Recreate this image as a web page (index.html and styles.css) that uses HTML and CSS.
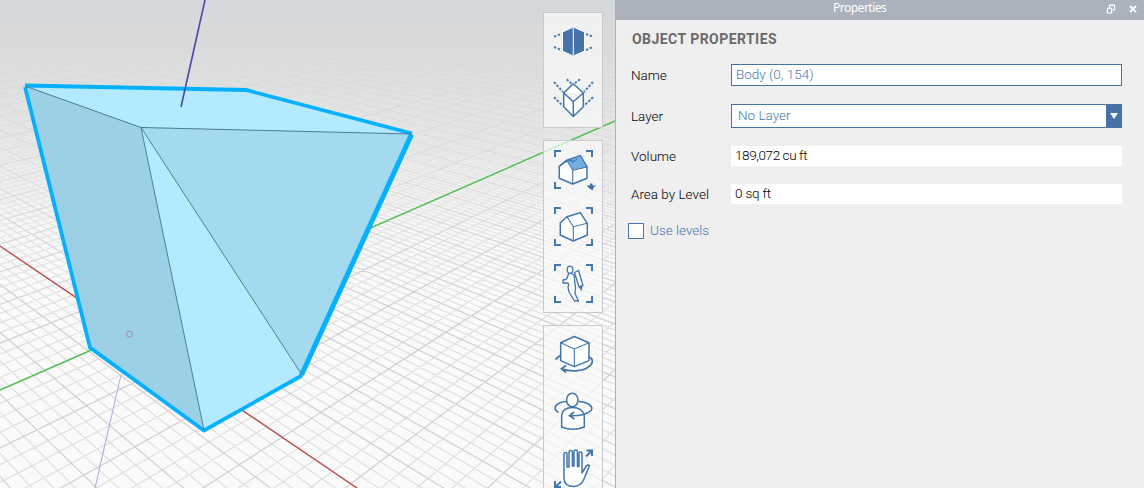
FILE: index.html
```
<!DOCTYPE html>
<html lang="en">
<head>
<meta charset="utf-8">
<title>Properties</title>
<link rel="stylesheet" href="styles.css">
</head>
<body>
<div class="app">
  <main class="viewport">
    <svg class="scene" width="615" height="488" viewBox="0 0 615 488">
      <defs>
        <linearGradient id="sky" x1="0" y1="0" x2="0" y2="1">
          <stop offset="0" stop-color="#d3d8dc"/>
          <stop offset=".07" stop-color="#d9dadb"/>
          <stop offset=".18" stop-color="#dfe0e0"/>
          <stop offset=".3" stop-color="#eaeaea"/>
          <stop offset=".48" stop-color="#f8f8f8"/>
          <stop offset=".6" stop-color="#fafafa"/>
          <stop offset="1" stop-color="#fafafa"/>
        </linearGradient>
        <linearGradient id="fade" x1="0" y1="0" x2="0" y2="488" gradientUnits="userSpaceOnUse">
          <stop offset=".07" stop-color="#000"/>
          <stop offset=".22" stop-color="#666"/>
          <stop offset=".5" stop-color="#ddd"/>
          <stop offset=".7" stop-color="#fff"/>
        </linearGradient>
        <mask id="haze" maskUnits="userSpaceOnUse" x="0" y="0" width="615" height="488"><rect width="615" height="488" fill="url(#fade)"/></mask>
      </defs>
      <rect width="615" height="488" fill="url(#sky)"/>
      <g mask="url(#haze)" fill="none">
        <path id="minor" class="grid-minor"/>
        <path id="major" class="grid-major"/>
      </g>
      <path class="axis red" d="M0 246 357 488"/>
      <path class="axis green" d="M0 390 615 121"/>
      <path class="axis below" d="M121 375 95 488"/>
      <path fill="#9bd0e7" d="M25 86 141 127 204 430 90 347z"/>
      <path fill="#b2eaff" d="M25 86 246 90 412 134 141 127zM141 127 302 375 204 430z"/>
      <path fill="#a3daef" d="M141 127 412 134 302 375z"/>
      <path class="outline" d="M25 85.500 246 90 412 133.500M25 87 90 347.500 204 430.500 302 375.500"/>
      <path class="outline heavy" d="M411.500 134.500 301.500 375"/>
      <path class="edge" d="M25 86 141 127.500 412 134M141 127.500 204 430M141 127.500 302 375"/>
      <path class="axis blue" d="M205 0 181 107"/>
      <circle cx="129.500" cy="334" r="3" fill="none" stroke="#a58b9f"/>
    </svg>
    <nav class="toolbars">
      <div class="toolbar">
        <svg class="tool" viewBox="0 0 58 57"><path fill="#4573a7" stroke="#fff" d="M29.300 14 40.500 19V38.200L29.300 43 18.500 38.200V19z"/><path d="M29.300 15V42" stroke="#fff"/><path class="dots" d="M10 23.700 17 21M42 21 49 23.700M10 34 17 37M42 37 49 34"/></svg>
        <svg class="tool" viewBox="0 0 58 57"><path class="f" d="M29.300 13.700 39.300 23V36.700L29.300 46.500 19.700 36.700V23zM19.700 23 29.300 31.700 39.300 23M29.300 31.700V46"/><path class="dots" d="M10 12 19 22M49 12 40 22M10 27.300 18.700 35.700M49 27.300 40 35.700M22.700 9.300 28 14M36 9.300 31 13"/></svg>
      </div>
      <div class="toolbar">
        <svg class="tool" viewBox="0 0 58 57"><path class="brackets" d="M11 16V10H17M42 10H48V16M11 41V47H17"/><path class="f" d="M15.300 25.300 22.700 19.300 36.300 14.700 43 26V37.300L28.700 43 15.300 37.300z"/><path d="M22.700 19.300 36.300 14.700 43 26 28.700 29.300z" fill="#72aee3" stroke="#4573a7"/><path class="s thin" d="M28.700 29.300V43M19 22 27 19 29 21 33 18M15.300 25.300 22.700 19.300"/><path fill="#3e70aa" d="M42.500 44.500H46V42.500H48.500V44.500H52L49.500 46.500 48.500 49.500 45.500 47.500z"/></svg>
        <svg class="tool" viewBox="0 0 58 57"><path class="brackets" d="M11 16V10H17M42 10H48V16M11 41V47H17M42 47H48V41"/><path class="f" d="M16.300 24.700 23 18.700 36.300 14.700 43.300 25.300V37L29.300 43 16.300 37z"/><path class="s thin" d="M23 18.700 29.300 28.700 43.300 25.300M29.300 28.700V43"/></svg>
        <svg class="tool" viewBox="0 0 58 57"><path class="brackets" d="M11 16V10H17M42 10H48V16M11 41V47H17M42 47H48V41"/><path class="f fine" d="M24.500 19Q23.500 23 22 24.500L19 25V28H24Q25.500 30 24 32L25 37 30.500 46H34.500L31 38.500 31.500 33 30 20Q27 17.500 24.500 19z"/><ellipse class="f fine" cx="26" cy="14.700" rx="2.800" ry="3.500"/><path class="f fine" d="M30.500 17.500 34.500 15.500 39 30.500 35 32z"/><path fill="#4573a7" d="M34.500 31.500 39 29.500 37.500 36z"/></svg>
      </div>
      <div class="toolbar">
        <svg class="tool" viewBox="0 0 58 57"><path class="f" d="M30.300 10.500 45 16.800V34.600L30.300 40.600 16.700 34.600V16.800z"/><path class="s thin" d="M16.700 16.800 30.300 23 45 16.800M30.300 23V40"/><path class="s" d="M11.500 33.500 16 29.500M45 31.500C49 32 49 36 47 38.500 41 46 27 46 17.500 42.700M22 39.500 17.500 42.700 22 46.500"/></svg>
        <svg class="tool" viewBox="0 0 58 57"><path class="f" d="M17.700 44V32Q19 24.500 28.500 24.500T40.300 32V44Q29 48.500 17.700 44z"/><ellipse class="f" cx="28.300" cy="17" rx="5.700" ry="6.700"/><path class="s" d="M22.500 18.500C13 19 7 25 14.500 29.500M34.500 18.500C44 19 50 23.500 47 27.500 42 32.500 34 33 25.500 32.700M30 29 25.500 32.700 30.500 36"/></svg>
        <svg class="tool" viewBox="0 0 58 57"><path class="f" d="M20 38V14Q20 12.500 21.500 12.500T23 14V27H25V12Q25 10.500 26.700 10.500T28.400 12V26H30V11.500Q30 10 31.700 10T33.400 11.500V26.500H35V13.500Q35 12 36.500 12T38 13.500V33L42 26.500Q43.500 24 45.500 25.500L40 39Q37 46 30 46.500 20 46.500 20 38z"/><path class="s arrows" d="M42 16.500 47.500 11M42.500 10.500H48V16M17 41.500 11.500 47M11 41V47H17"/></svg>
      </div>
    </nav>
  </main>
  <aside class="panel">
    <header class="titlebar"><span class="title">Properties</span>
      <svg class="winbtns" width="34" height="12" viewBox="0 0 34 12"><path d="M3.500 5V2.500H8.500V7H6M1.500 5.500H5.500V10H1.500zM3 2H9M1 5.300H6" fill="none" stroke="#fff" stroke-width="1.200"/><path d="M24 3 30 9M30 3 24 9" stroke="#fff" stroke-width="1.800"/></svg>
    </header>
    <h1 class="heading">OBJECT PROPERTIES</h1>
    <div class="form">
      <div class="row name"><label>Name</label><div class="field boxed"><span class="t-name">Body (0, 154)</span></div></div>
      <div class="row layer"><label>Layer</label><div class="field boxed select"><span class="t-layer">No Layer</span><i class="drop"></i></div></div>
      <div class="row volume"><label>Volume</label><div class="field"><span class="t-vol">189,072 cu ft</span></div></div>
      <div class="row area"><label class="l-area">Area by Level</label><div class="field"><span class="t-area">0 sq ft</span></div></div>
    </div>
    <div class="check"><i class="checkbox"></i><span>Use levels</span></div>
  </aside>
</div>
<script src="grid.js"></script>
</body>
</html>
```
FILE: styles.css
```
* { box-sizing: border-box; }
body { margin: 0; overflow: hidden; font-family: Roboto, "Liberation Sans", sans-serif; font-size: 13.5px; font-weight: 300; color: #000; }
.app { display: flex; width: 1144px; height: 488px; }
.viewport { position: relative; width: 615px; overflow: hidden; }
.scene { display: block; }
.grid-minor { stroke: #e1e1e1; stroke-width: 1.3; }
.grid-major { stroke: #d2d2d2; stroke-width: 1.3; }
.axis { fill: none; stroke-width: 1.4; }
.red { stroke: #c24f4f; }
.green { stroke: #4fbf4b; }
.blue { stroke: #4c45ae; stroke-width: 1.6; }
.below { stroke: #b0aedb; stroke-width: 1.1; }
.outline { fill: none; stroke: #05b1ff; stroke-width: 3.8; }
.heavy { stroke-width: 5; }
.edge { fill: none; stroke: #4b7f90; stroke-width: 1; }
.toolbars { position: absolute; left: 543px; top: 12px; display: flex; flex-direction: column; gap: 12px; }
.toolbar { display: flex; flex-direction: column; width: 60px; border: 1px solid #cacaca; background: rgba(250, 250, 250, .72); }
.tool { display: block; width: 58px; height: 57px; fill: none; }
.f { fill: #fff; stroke: #4175ad; stroke-width: 1.5; stroke-linejoin: round; }
.s { fill: none; stroke: #4175ad; stroke-width: 1.7; }
.thin { stroke-width: 1.1; }
.fine { stroke-width: 1.3; }
.arrows { stroke-width: 2; }
.dots { stroke: #4b7caf; stroke-width: 2; stroke-dasharray: 2.4 1.6; }
.brackets { stroke: #4378af; stroke-width: 2; }
.panel { width: 529px; background: #efefef; border-left: 1px solid #abb2bf; }
.titlebar { display: flex; height: 20px; padding: 0 4px 0 217px; background: #abb2be; color: #fff; justify-content: space-between; }
.title { font: 12px/16px "Noto Sans", sans-serif; letter-spacing: -.5px; }
.winbtns { margin-top: 3px; }
.heading { margin: 9px 0 0 16px; font-size: 14px; line-height: 20px; font-weight: 700; color: #6a6a6a; letter-spacing: .45px; white-space: nowrap; }
.form { display: flex; flex-direction: column; margin: 15px 22px 0 15px; }
.row { display: grid; grid-template-columns: 100px 391px; align-items: center; white-space: nowrap; }
.field { display: flex; align-items: center; height: 20px; padding: 0 0 2px 4px; background: #fff; color: #000; }
.boxed { height: 22px; border: 1px solid #4573a7; color: #4578b2; }
.select { height: 24px; justify-content: space-between; padding: 0 0 0 6px; }
.t-layer { padding-bottom: 2px; }
.layer { margin-top: 18px; }
.volume { margin-top: 18px; }
.area { margin-top: 18px; }
.t-vol { letter-spacing: -.4px; }
.t-area { letter-spacing: -.2px; }
.drop { display: flex; width: 15px; height: 22px; background: #4573a7; align-items: center; justify-content: center; }
.drop::after { content: ""; border: 4px solid transparent; border-top: 6px solid #fff; border-bottom: 0; }
.check { display: flex; align-items: center; gap: 6px; margin: 18px 0 0 12px; color: #4578b2; line-height: 16px; }
.check span { padding-bottom: 2px; }
.checkbox { width: 16px; height: 16px; border: 1px solid #4578b2; background: #fff; }
```
FILE: grid.js
```
// Ground plane in one-major-cell units, projected with two vanishing points.
const U = -0.06438, V = 0.03919, horizon = -100;
const origin = [129.1, 333.5], vpU = -510, vpV = 1120;
function project(u, v) {
  const w = 1 + U * u + V * v;
  return [
    (origin[0] + U * u * vpU + V * v * vpV) / w,
    (origin[1] + (U * u + V * v) * horizon) / w
  ].map(n => n.toFixed(2)).join(' ');
}
let minor = '', major = '';
for (let i = -240; i <= 400; i++) {
  const k = i / 4;
  const a = 'M' + project(k, (-0.4 - U * k) / V) + 'L' + project(k, (3 - U * k) / V);
  const b = 'M' + project((-0.4 - V * k) / U, k) + 'L' + project((3 - V * k) / U, k);
  if (i % 4) minor += a + b; else major += a + b;
}
document.getElementById('minor').setAttribute('d', minor);
document.getElementById('major').setAttribute('d', major);
```
